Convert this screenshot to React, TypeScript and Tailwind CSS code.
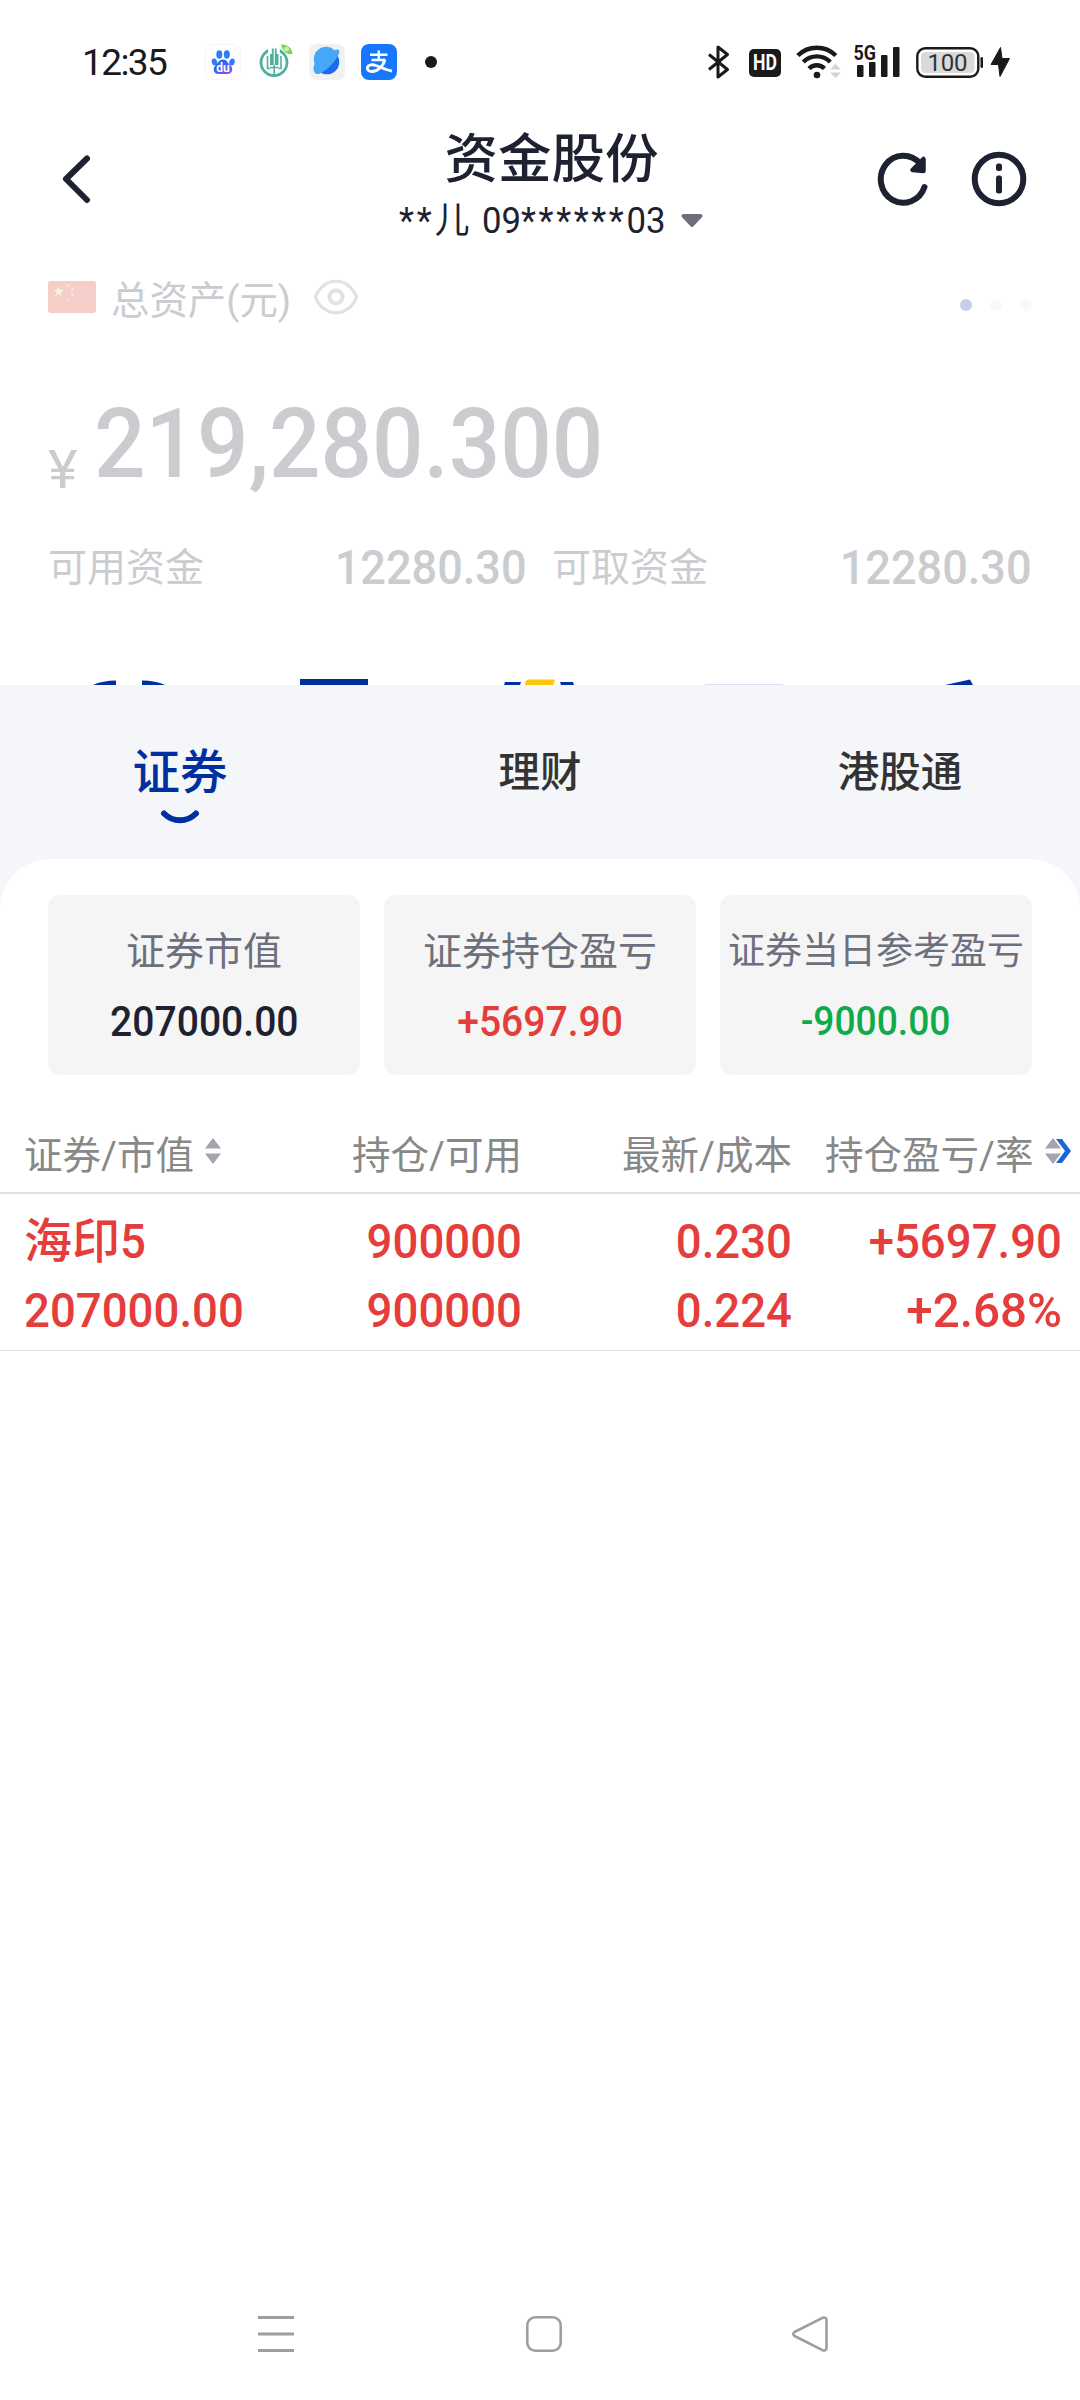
import React from 'react';

interface TabItem {
  label: string;
  active?: boolean;
}

interface SummaryItem {
  label: string;
  value: string;
  labelClass: string;
  valueClass: string;
}

const tabs: TabItem[] = [
  { label: '证券', active: true },
  { label: '理财' },
  { label: '港股通' },
];

const summary: SummaryItem[] = [
  { label: '证券市值', value: '207000.00', labelClass: 'text-[39px]', valueClass: 'text-[42px] text-[#1d2130]' },
  { label: '证券持仓盈亏', value: '+5697.90', labelClass: 'text-[39px]', valueClass: 'text-[42px] text-[#e43d3c]' },
  { label: '证券当日参考盈亏', value: '-9000.00', labelClass: 'text-[37px]', valueClass: 'text-[40px] text-[#0fab4b]' },
];

const StatusBar: React.FC = () => (
  <div className="h-[124px] flex items-center justify-between pl-[82px] pr-[70px]">
    <div className="flex items-center">
      <span className="w-[123px] mt-0.5 text-[37px] leading-[44px] tracking-[-1.6px] text-[#1a1a1a]">12:35</span>
      <svg className="w-9 h-9" viewBox="0 0 36 36">
        <defs>
          <linearGradient id="paw" x1="0" y1="0" x2="1" y2="1">
            <stop offset="0.3" stopColor="#2468f2" />
            <stop offset="1" stopColor="#a04be8" />
          </linearGradient>
        </defs>
        <rect x="0.5" y="0.5" width="35" height="35" rx="8" fill="#fff" stroke="#f5f5f5" />
        <ellipse cx="9.500" cy="18" rx="2.700" ry="3.600" fill="#2f7df5" transform="rotate(-15 9.500 18)" />
        <ellipse cx="14.300" cy="10.500" rx="3" ry="4.200" fill="#2f7df5" />
        <ellipse cx="21.800" cy="10.500" rx="3" ry="4.200" fill="#2f7df5" />
        <ellipse cx="27" cy="18" rx="2.700" ry="3.600" fill="#2f7df5" transform="rotate(15 27 18)" />
        <path d="M18 15.500c4 0 4.500 3.500 7.500 6 3.500 3.500 1.500 8.500-3 8.500h-9c-4.500 0-6.500-5-3-8.500 3-2.500 3.500-6 7.500-6z" fill="url(#paw)" />
        <text x="18" y="27.500" textAnchor="middle" fontSize="12" fontWeight="700" fill="#fff">du</text>
      </svg>
      <svg className="w-9 h-9 ml-[17px]" viewBox="0 0 36 36">
        <circle cx="16" cy="18.500" r="13" fill="none" stroke="#4fb0a0" strokeWidth="2.800" />
        <rect x="10.200" y="4" width="11.600" height="6" fill="#fff" />
        <path d="M12 10h1.800V4.500h1.900v16.500H12zM20.500 10h-1.800V4.500h-1.900v16.500h3.700z" fill="#4fb0a0" />
        <path d="M12 23.500h8.500M16.200 21v10.500M9.500 12v12.500h2.500M23 12v12.500h-2.500" fill="none" stroke="#4fb0a0" strokeWidth="1.600" />
        <path d="M23 .5c6-.5 11 3 11.500 9.500-6 1-10-3-11.500-9.500z" fill="#83cf45" />
        <circle cx="28.500" cy="5" r="2.500" fill="#c9eeae" />
      </svg>
      <svg className="w-9 h-9 ml-[15px]" viewBox="0 0 36 36">
        <rect width="36" height="36" rx="8" fill="#f1f1f1" />
        <circle cx="18" cy="18" r="12.300" fill="#2068ec" />
        <path d="M5.700 19.500C2.500 26 6 32 11 29.500 19 25.500 27 17 30 9.500c1-3-.5-5-4.300-3.300A12.300 12.300 0 0 0 5.700 19.500z" fill="#45a7f8" />
      </svg>
      <svg className="w-9 h-9 ml-4" viewBox="0 0 36 36">
        <rect width="36" height="36" rx="8" fill="#1677fe" />
        <path d="M9 10.800h17.500M17.800 6.500v9M10.500 16h14" fill="none" stroke="#fff" strokeWidth="2.500" />
        <path d="M24 16c-2 6-7 11.500-13 11.500-3.500 0-5.300-2-4.500-4.300 1-2.700 5-3 8.500-1.700 5 1.800 10 4.500 16 5.500" fill="none" stroke="#fff" strokeWidth="2.900" />
      </svg>
      <span className="ml-[28px] w-3 h-3 rounded-full bg-[#1a1a1a]" />
    </div>

    <div className="flex items-center">
      <svg className="w-[22px] h-9" viewBox="0 0 22 36" fill="none" stroke="#1a1a1a" strokeWidth="3">
        <path d="M1 10.500 19.500 25.500 10 33V3L19.500 10.500 1 25.500" strokeLinejoin="round" />
      </svg>
      <span className="ml-[19px] mt-0.5 w-8 h-7 rounded-[5px] bg-[#1a1a1a] text-white text-[22px] leading-[28px] font-bold text-center">
        <span className="inline-block scale-x-[0.8] -mx-1">HD</span>
      </span>
      <svg className="w-[46px] h-9 ml-[15px]" viewBox="0 0 46 36" fill="none" stroke="#1a1a1a" strokeWidth="4.400">
        <path d="M1.800 11.500a27 27 0 0 1 38 0M7.300 18a19 19 0 0 1 27 0M13 24.500a11 11 0 0 1 15.500 0" />
        <circle cx="21" cy="31" r="3.300" fill="#1a1a1a" stroke="none" />
        <path d="M34 25.500h11l-5.500-6zM34 28.500h11l-5.500 5.500z" fill="#d5d5d5" stroke="none" />
      </svg>
      <svg className="w-[50px] h-10 ml-3 -mt-1" viewBox="0 -4 50 40" fill="#1a1a1a">
        <text x="-0.500" y="16" fontSize="20.500" fontWeight="700" textLength="22.500" lengthAdjust="spacingAndGlyphs">5G</text>
        <rect x="3" y="21" width="6.500" height="12" rx="1" />
        <rect x="15" y="18" width="6.500" height="15" rx="1" />
        <rect x="27" y="11" width="6.500" height="22" rx="1" />
        <rect x="39" y="3" width="6.500" height="30" rx="1" />
      </svg>
      <svg className="w-[70px] h-9 ml-3" viewBox="0 0 70 36">
        <rect x="1.300" y="4.300" width="61" height="28.500" rx="8" fill="none" stroke="#1a1a1a" strokeWidth="2.400" />
        <rect x="5" y="8" width="53.500" height="21" rx="4.500" fill="#dadada" />
        <rect x="64.500" y="13" width="2.500" height="11" rx="1.200" fill="#1a1a1a" />
        <text x="31.500" y="27" textAnchor="middle" fontSize="24" fill="#333" textLength="40">100</text>
      </svg>
      <svg className="w-5 h-[30px] ml-1" viewBox="0 0 20 30" fill="#1a1a1a">
        <path d="M10.500.5 1 17.500h7.500L10 29.500l9.500-18h-7.500z" stroke="#1a1a1a" strokeLinejoin="round" />
      </svg>
    </div>
  </div>
);

const Header: React.FC = () => (
  <header className="h-[130px] grid grid-cols-[399px_305px_1fr] text-[#1d2130]">
    <svg className="w-8 h-[50px] ml-[60px] mt-[30px]" viewBox="0 0 32 50" fill="none" stroke="currentColor" strokeWidth="6" strokeLinecap="round" strokeLinejoin="round">
      <path d="M27 4.500 6 25l21 21" />
    </svg>
    <div className="flex flex-col items-center">
      <h1 className="mt-1 text-[53.5px] leading-[64px] font-medium whitespace-nowrap">资金股份</h1>
      <div className="mt-[7px] w-full flex items-center justify-between">
        <div className="w-[266px] text-[36px] leading-[44px] whitespace-nowrap">
          <span className="inline-block origin-left scale-x-[0.965]">
            <span className="tracking-[3px]">**</span>
            <span className="mr-1">儿</span> 09<span className="tracking-[2.700px]">******</span>03
          </span>
        </div>
        <svg className="w-6 h-4" viewBox="0 0 24 16" fill="#6d707c" stroke="#6d707c" strokeWidth="4" strokeLinejoin="round">
          <path d="M3.500 3h17L12 12z" />
        </svg>
      </div>
    </div>
    <div className="flex justify-end gap-[40px] pr-[53px] pt-[27px]">
      <svg className="w-14 h-14" viewBox="0 0 56 56" fill="none" stroke="currentColor" strokeWidth="6" strokeLinecap="round" strokeLinejoin="round">
        <path d="M49.500 36A22.500 23.500 0 1 1 45 12.500" />
        <path d="M48.500 8v12L37.500 19z" fill="currentColor" strokeWidth="4.500" />
      </svg>
      <svg className="w-14 h-14" viewBox="0 0 56 56" fill="none" stroke="currentColor" strokeWidth="6">
        <circle cx="28" cy="28" r="24.300" />
        <rect x="25" y="12.500" width="6" height="7.500" rx="2.500" fill="currentColor" stroke="none" />
        <rect x="25" y="24.500" width="6" height="18" rx="2.500" fill="currentColor" stroke="none" />
      </svg>
    </div>
  </header>
);

const Flag: React.FC = () => (
  <svg className="w-12 h-8" viewBox="0 0 48 32">
    <rect width="48" height="32" rx="3" fill="#f5cdc9" />
    <path d="m10.700 5 1.400 3.700 4 .2-3.100 2.500 1 3.800-3.300-2.200-3.300 2.200 1-3.800-3.100-2.500 4-.2z" fill="#fdf3dc" />
    <g fill="#fae6d0">
      <circle cx="20.500" cy="4.500" r="1.500" />
      <circle cx="24.500" cy="8.500" r="1.500" />
      <circle cx="24.500" cy="14.500" r="1.500" />
      <circle cx="20.500" cy="18.500" r="1.500" />
    </g>
  </svg>
);

const Assets: React.FC = () => (
  <section className="text-[#cbccd0]">
    <div className="h-[90px] flex items-center pl-12 pr-12">
      <div className="-mt-1">
        <Flag />
      </div>
      <span className="ml-[15px] w-[180px] text-[39px] leading-[50px] whitespace-nowrap mt-1">
        <span className="inline-block origin-left scale-x-[0.985]">总资产(元)</span>
      </span>
      <svg className="w-[46px] h-9 ml-[22px] -mt-1" viewBox="0 0 46 36" fill="none" stroke="#e0e1e4" strokeWidth="3.200">
        <path d="M2.500 18C10-3 36-3 43.500 18 36 39 10 39 2.500 18z" strokeLinejoin="round" />
        <circle cx="23" cy="18" r="6.500" strokeWidth="4" />
      </svg>
      <div className="ml-auto mt-3 flex gap-[18px]">
        <i className="w-3 h-3 rounded-full bg-[#c5cfe9]" />
        <i className="w-3 h-3 rounded-full bg-[#f8f9fe]" />
        <i className="w-3 h-3 rounded-full bg-[#f8f9fe]" />
      </div>
    </div>

    <div className="mt-11 h-[110px] flex pl-12">
      <span className="w-[46px] pt-[51px] text-[54px] leading-[62px]">
        <span className="inline-block origin-left scale-x-[1.04]">¥</span>
      </span>
      <span className="inline-block origin-left scale-x-[0.935] text-[97px] leading-[112px] font-medium">219,280.300</span>
    </div>

    <div className="mt-[40px] h-[60px] flex items-center pl-12 pr-[48px] text-[39px] leading-[60px]">
      <span className="w-[160px]">可用资金</span>
      <span className="w-[319px] text-right text-[49px] font-medium">
        <span className="inline-block origin-right scale-x-[0.92]">12280.30</span>
      </span>
      <span className="ml-[25px] w-[160px]">可取资金</span>
      <span className="flex-1 text-right text-[49px] font-medium">
        <span className="inline-block origin-right scale-x-[0.92]">12280.30</span>
      </span>
    </div>

    {/* tops of the shortcut icons, cut off by the sheet below */}
    <svg className="mt-[80px] block w-full h-[7px]" viewBox="0 0 1080 7" fill="#00309f">
      <path d="M93 7c6-3 14-4.500 23-4.500V7zM142 2.500c9 0 17 1.500 23 4.500h-23z" />
      <path d="M300 1h68v6h-68zM505 4h16l-1 3h-16zM560 4h13l1 3h-13z" />
      <path d="M525 7c0-3 1-5.500 3-5.500h27L553.500 7z" fill="#fcc70c" />
      <path d="M705 6h78v1h-78z" fill="#dbe2ee" />
      <path d="m945 7 25-5.500L973 7z" />
    </svg>
  </section>
);

const SortArrows: React.FC = () => (
  <svg className="w-[18px] h-7 shrink-0" viewBox="0 0 18 28" fill="#a3a4ad">
    <path d="M1 11.500h16L9 1zM1 16.500h16L9 27z" />
  </svg>
);

const Tabs: React.FC = () => (
  <div className="h-[174px] grid grid-cols-3">
    {tabs.map((tab) =>
      tab.active ? (
        <div key={tab.label} className="flex flex-col items-center pt-[56px] text-[#00309f]">
          <span className="text-[47.5px] leading-[64px] font-medium">{tab.label}</span>
          <svg className="w-10 h-4 mt-[4px]" viewBox="0 0 40 16" fill="none" stroke="currentColor" strokeWidth="6" strokeLinecap="round">
            <path d="M4 4.500c9 9 23 9 32 0" />
          </svg>
        </div>
      ) : (
        <div key={tab.label} className="pt-[56px] text-center text-[41.5px] leading-[64px] font-medium text-[#333]">
          {tab.label}
        </div>
      )
    )}
  </div>
);

const Holdings: React.FC = () => (
  <div className="mt-[37px]">
    <div className="h-[82px] grid grid-cols-[24px_297px_201px_270px_1fr] border-b-2 border-[#e0e0e0] text-[38.5px] leading-[88px] text-[#888] whitespace-nowrap">
      <span />
      <div className="flex items-center">
        <span className="w-[180px]">证券/市值</span>
        <span className="flex -mt-2.5">
          <SortArrows />
        </span>
      </div>
      <span className="text-right">持仓/可用</span>
      <span className="text-right">最新/成本</span>
      <div className="flex items-center pl-[33px]">
        <span className="w-[219px]">持仓盈亏/率</span>
        <span className="relative flex -mt-2.5">
          <svg className="absolute left-[11px] top-[2px] w-[18px] h-6" viewBox="0 0 18 24" fill="#1b66d2">
            <path d="M1 0h6l9 12-9 12H1l9-12z" />
          </svg>
          <span className="relative flex">
            <SortArrows />
          </span>
        </span>
      </div>
    </div>
    <div className="h-[157px] grid grid-cols-[24px_297px_201px_270px_270px] grid-rows-[69px_69px] pt-[13px] border-b border-[#e0e0e0] text-[49px] leading-[69px] font-medium text-[#e43d3c] whitespace-nowrap">
      <span />
      <span className="text-[48px]">
        海印<span className="inline-block origin-left scale-x-[0.93] text-[49px]">5</span>
      </span>
      <span className="inline-block origin-right scale-x-[0.93] text-right">900000</span>
      <span className="inline-block origin-right scale-x-[0.93] text-right">0.230</span>
      <span className="inline-block origin-right scale-x-[0.93] text-right">+5697.90</span>
      <span />
      <span className="inline-block origin-left scale-x-[0.93]">207000.00</span>
      <span className="inline-block origin-right scale-x-[0.93] text-right">900000</span>
      <span className="inline-block origin-right scale-x-[0.93] text-right">0.224</span>
      <span className="inline-block origin-right scale-x-[0.97] text-right">+2.68%</span>
    </div>
  </div>
);

const NavBar: React.FC = () => (
  <nav className="h-[132px] flex items-center justify-between pl-[257px] pr-[251px]">
    <svg className="w-[38px] h-[38px]" viewBox="0 0 38 38" stroke="#9e9e9e" strokeWidth="3">
      <path d="M1 2.500h36M1 19h36M1 35.500h36" />
    </svg>
    <svg className="w-[38px] h-[38px] ml-0.5" viewBox="0 0 38 38" fill="none" stroke="#9e9e9e" strokeWidth="2.600">
      <rect x="2.300" y="2.300" width="33.400" height="33.400" rx="8" />
    </svg>
    <svg className="w-[38px] h-[38px]" viewBox="0 0 38 38" fill="none" stroke="#9e9e9e" strokeWidth="2.600" strokeLinejoin="round">
      <path d="M31.500 2.800 3.500 17q-2.500 2 0 4l28 14.200q4 1 4-2.500V5.300q0-3.500-4-2.500z" />
    </svg>
  </nav>
);

export default function App() {
  return (
    <div className="w-[1080px] h-[2400px] flex flex-col overflow-hidden bg-white font-[Roboto,'Noto_Sans_CJK_SC',sans-serif]">
      <StatusBar />
      <Header />
      <Assets />
      <main className="flex-1 flex flex-col bg-[#f4f6fa]">
        <Tabs />
        <div className="flex-1 rounded-t-[50px] bg-white">
          <div className="pt-9 px-12 grid grid-cols-3 gap-6">
            {summary.map((item) => (
              <div key={item.label} className="h-[180px] pt-7 rounded-xl bg-[#f5f5f5] flex flex-col items-center whitespace-nowrap">
                <span className={`${item.labelClass} leading-[58px] text-[#6d707c]`}>{item.label}</span>
                <span className={`${item.valueClass} mt-3 leading-[58px] font-medium scale-x-[0.93]`}>{item.value}</span>
              </div>
            ))}
          </div>
          <Holdings />
        </div>
      </main>
      <NavBar />
    </div>
  );
}
